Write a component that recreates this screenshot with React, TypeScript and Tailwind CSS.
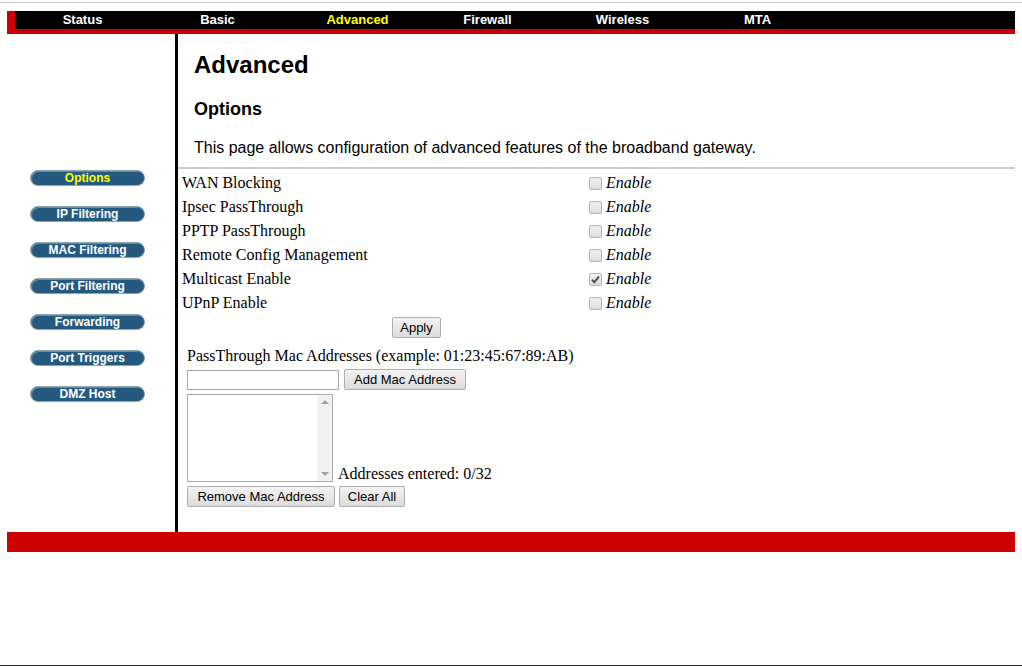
import React from "react";

const navItems = ["Status", "Basic", "Advanced", "Firewall", "Wireless", "MTA"];
const sideItems = [
  "Options",
  "IP Filtering",
  "MAC Filtering",
  "Port Filtering",
  "Forwarding",
  "Port Triggers",
  "DMZ Host",
];
const options = [
  { label: "WAN Blocking", checked: false },
  { label: "Ipsec PassThrough", checked: false },
  { label: "PPTP PassThrough", checked: false },
  { label: "Remote Config Management", checked: false },
  { label: "Multicast Enable", checked: true },
  { label: "UPnP Enable", checked: false },
];

const sans = "font-['Liberation_Sans',Arial,sans-serif]";
const serif = "font-['Liberation_Serif','Times_New_Roman',serif]";

const OldButton = ({ label, width }: { label: string; width: string }) => (
  <button
    className={`${sans} ${width} h-[21px] text-[13px] leading-none text-black border border-[#adadad] rounded-[2px] bg-gradient-to-b from-[#f3f3f3] to-[#dcdcdc] flex items-center justify-center`}
  >
    {label}
  </button>
);

const Checkbox = ({ checked }: { checked: boolean }) => (
  <span className="relative inline-block w-[13px] h-[13px]">
    <input
      type="checkbox"
      defaultChecked={checked}
      className="appearance-none block w-[13px] h-[13px] m-0 border border-[#b5b5b5] rounded-[2px] bg-gradient-to-b from-[#f0f0f0] to-[#dedede]"
    />
    {checked && (
      <svg
        viewBox="0 0 13 13"
        className="absolute left-0 top-0 w-[13px] h-[13px] pointer-events-none"
      >
        <path
          d="M3 6.8 L5.3 9.2 L10 3.5"
          fill="none"
          stroke="#555"
          strokeWidth="2"
        />
      </svg>
    )}
  </span>
);

export default function App() {
  return (
    <div className="w-[1022px] h-[666px] bg-white border-b border-[#2b2b2b] box-border">
      {/* top frame line */}
      <div className="h-[3px] border-b border-[#cfcfcf]" />

      {/* Top nav */}
      <div className="mt-[8px] ml-[7px] w-[1008px] h-[23px] bg-black border-l-[8px] border-b-[5px] border-[#cc0000] flex">
        {navItems.map((item) => (
          <div
            key={item}
            className={`${sans} w-[135px] h-[18px] flex items-center justify-center text-[13px] font-bold ${
              item === "Advanced" ? "text-[#ffff00] pl-[10px]" : "text-white"
            }`}
          >
            {item}
          </div>
        ))}
      </div>

      {/* Body */}
      <div className="flex w-[1015px] h-[498px]">
        {/* Sidebar */}
        <div className="w-[178px] border-r-[3px] border-black pt-[136px] flex flex-col items-start gap-[20px]">
          {sideItems.map((item) => (
            <div
              key={item}
              className={`${sans} ml-[30px] w-[115px] h-[16px] rounded-full bg-[#245a80] border border-[#8aa3ad] shadow-[inset_1px_1px_0_#6d8f9c] flex items-center justify-center text-[12px] font-bold leading-none ${
                item === "Options" ? "text-[#ffff00]" : "text-white"
              }`}
            >
              {item}
            </div>
          ))}
        </div>

        {/* Main */}
        <div className="flex-1">
          <div className={`${sans} pl-[16px] pt-[17px] text-black`}>
            <h1 className="text-[24px] font-bold leading-[28px]">Advanced</h1>
            <h2 className="mt-[20px] text-[18px] font-bold leading-[21px]">
              Options
            </h2>
            <p className="mt-[19px] text-[16px] leading-[18px]">
              This page allows configuration of advanced features of the
              broadband gateway.
            </p>
          </div>
          <div className="mt-[10px] h-[2px] bg-[#cccccc]" />

          {/* Options table */}
          <div className={`${serif} text-[16px] text-black pl-[4px] pt-[2px]`}>
            {options.map((o) => (
              <div key={o.label} className="flex items-center h-[24px]">
                <div className="w-[407px]">{o.label}</div>
                <div className="flex items-center gap-[4px] italic">
                  <Checkbox checked={o.checked} />
                  <span>Enable</span>
                </div>
              </div>
            ))}
            <div className="flex h-[24px] items-center pl-[210px]">
              <OldButton label="Apply" width="w-[49px]" />
            </div>
          </div>

          {/* Mac addresses */}
          <div className="pl-[9px] pt-[8px] text-black">
            <div className={`${serif} text-[16px] leading-[18px]`}>
              PassThrough Mac Addresses (example: 01:23:45:67:89:AB)
            </div>
            <div className="mt-[4px] flex items-center gap-[5px]">
              <input
                type="text"
                className="w-[152px] h-[20px] border border-[#a9a9a9] px-[2px] text-[13px] outline-none"
              />
              <OldButton label="Add Mac Address" width="w-[122px]" />
            </div>
            <div className="mt-[4px] flex items-end gap-[5px]">
              <div className="w-[146px] h-[88px] border border-[#a9a9a9] flex justify-end">
                <div className="w-[15px] h-full bg-[#f1f1f1] flex flex-col items-center justify-between py-[4px]">
                  <svg viewBox="0 0 8 5" className="w-[8px] h-[5px]">
                    <path d="M0 5 L4 1 L8 5 Z" fill="#a3a3a3" />
                  </svg>
                  <svg viewBox="0 0 8 5" className="w-[8px] h-[5px]">
                    <path d="M0 0 L4 4 L8 0 Z" fill="#a3a3a3" />
                  </svg>
                </div>
              </div>
              <div className={`${serif} text-[16px] leading-[18px] mb-[-1px]`}>
                Addresses entered: 0/32
              </div>
            </div>
            <div className="mt-[4px] flex gap-[4px]">
              <OldButton label="Remove Mac Address" width="w-[148px]" />
              <OldButton label="Clear All" width="w-[66px]" />
            </div>
          </div>
        </div>
      </div>

      {/* Footer */}
      <div className="ml-[7px] w-[1008px] h-[20px] bg-[#cc0000]" />
    </div>
  );
}
